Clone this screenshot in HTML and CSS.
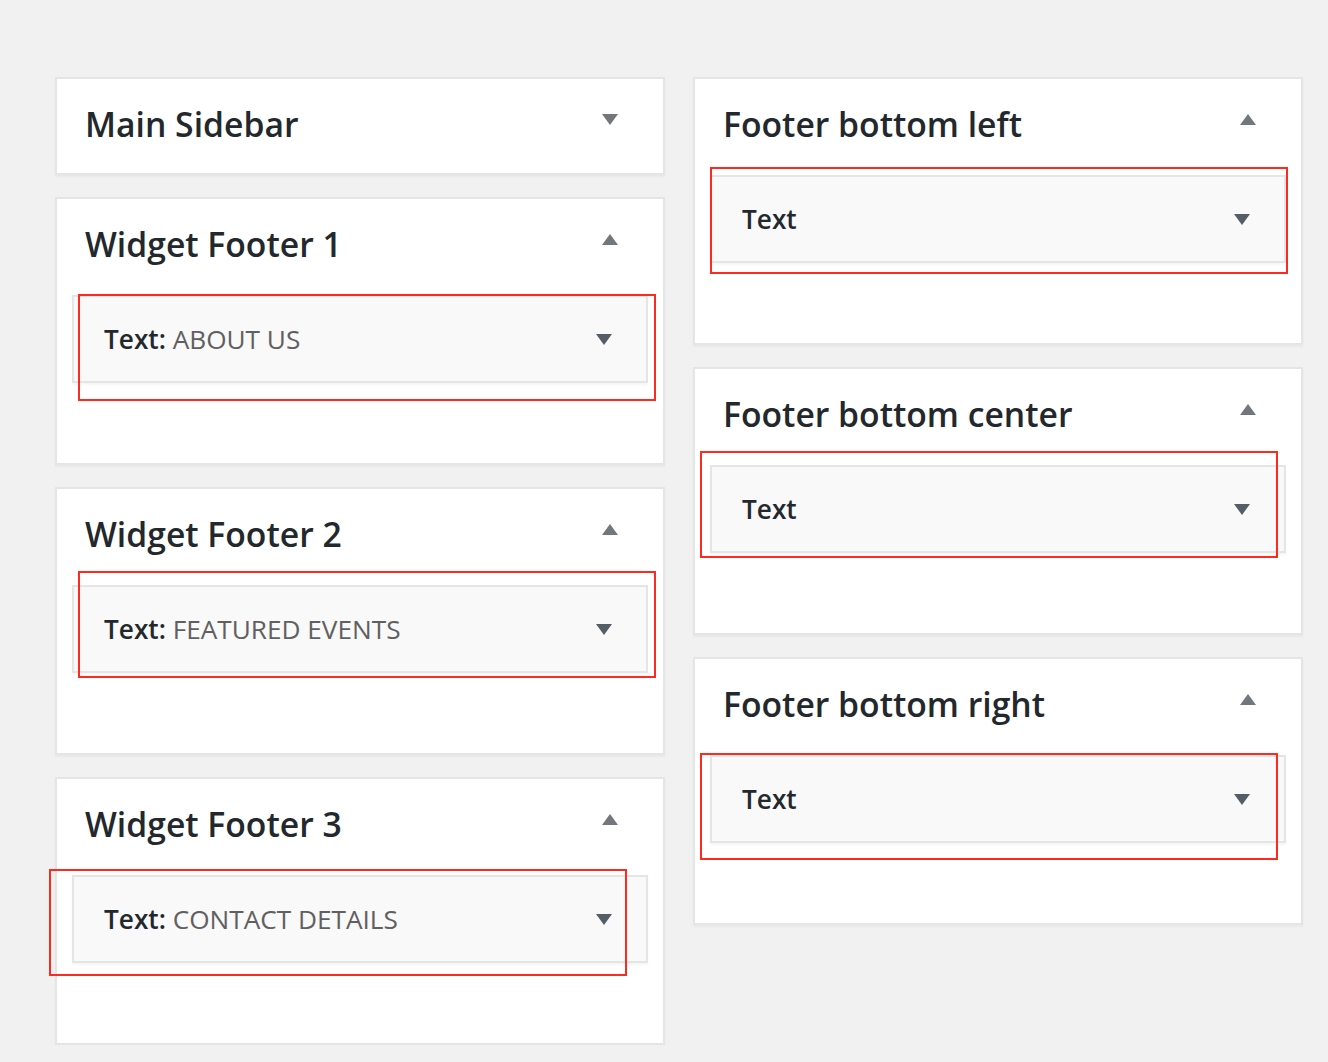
FILE: index.html
```html
<!DOCTYPE html>
<html lang="en">
<head>
<meta charset="utf-8">
<title>Widgets</title>
<link rel="stylesheet" href="styles.css">
</head>
<body>
<div class="areas">
  <div class="column">
    <section class="sidebar collapsed">
      <div class="sidebar-head">
        <h2>Main Sidebar</h2>
        <span class="toggle down"></span>
      </div>
    </section>
    <section class="sidebar">
      <div class="sidebar-head">
        <h2>Widget Footer 1</h2>
        <span class="toggle up"></span>
      </div>
      <div class="widget">
        <h3><strong>Text:</strong> <span class="in-title">ABOUT US</span></h3>
        <span class="wtoggle"></span>
        <div class="mark mark-wf1"></div>
      </div>
    </section>
    <section class="sidebar">
      <div class="sidebar-head">
        <h2>Widget Footer 2</h2>
        <span class="toggle up"></span>
      </div>
      <div class="widget">
        <h3><strong>Text:</strong> <span class="in-title">FEATURED EVENTS</span></h3>
        <span class="wtoggle"></span>
        <div class="mark mark-wf2"></div>
      </div>
    </section>
    <section class="sidebar">
      <div class="sidebar-head">
        <h2>Widget Footer 3</h2>
        <span class="toggle up"></span>
      </div>
      <div class="widget">
        <h3><strong>Text:</strong> <span class="in-title">CONTACT DETAILS</span></h3>
        <span class="wtoggle"></span>
        <div class="mark mark-wf3"></div>
      </div>
    </section>
  </div>
  <div class="column">
    <section class="sidebar">
      <div class="sidebar-head">
        <h2>Footer bottom left</h2>
        <span class="toggle up"></span>
      </div>
      <div class="widget">
        <h3><strong>Text</strong></h3>
        <span class="wtoggle"></span>
        <div class="mark mark-fbl"></div>
      </div>
    </section>
    <section class="sidebar">
      <div class="sidebar-head">
        <h2>Footer bottom center</h2>
        <span class="toggle up"></span>
      </div>
      <div class="widget">
        <h3><strong>Text</strong></h3>
        <span class="wtoggle"></span>
        <div class="mark mark-fbc"></div>
      </div>
    </section>
    <section class="sidebar">
      <div class="sidebar-head">
        <h2>Footer bottom right</h2>
        <span class="toggle up"></span>
      </div>
      <div class="widget">
        <h3><strong>Text</strong></h3>
        <span class="wtoggle"></span>
        <div class="mark mark-fbr"></div>
      </div>
    </section>
  </div>
</div>
</body>
</html>
```
FILE: styles.css
```css
html, body {
  margin: 0;
  padding: 0;
  background: #f1f1f1;
  font-family: "Open Sans", "Noto Sans", "Liberation Sans", sans-serif;
  color: #23282d;
}

.areas {
  display: flex;
  align-items: flex-start;
  gap: 28px;
  padding: 77px 0 0 55px;
}

.column {
  width: 610px;
  display: flex;
  flex-direction: column;
  gap: 22px;
}

.sidebar {
  box-sizing: border-box;
  background: #fff;
  border: 2px solid #e5e5e5;
  box-shadow: 0 2px 2px rgba(0, 0, 0, 0.04);
  padding: 0 15px 80px;
  height: 268px;
}

.sidebar.collapsed {
  height: 98px;
  padding-bottom: 0;
}

.sidebar-head {
  display: flex;
  align-items: center;
  justify-content: space-between;
  height: 93px;
  position: relative;
}

.sidebar-head h2 {
  margin: 0;
  padding-left: 13px;
  font-size: 33.7px;
  font-weight: 600;
  line-height: 1;
  color: #23282d;
  position: relative;
  top: -1px;
}

.toggle {
  position: absolute;
  right: 30px;
  top: 35px;
  width: 0;
  height: 0;
  border-left: 8px solid transparent;
  border-right: 8px solid transparent;
}

.toggle.down {
  border-top: 11px solid #72777c;
}

.toggle.up {
  border-bottom: 11px solid #72777c;
}

.widget {
  position: relative;
  box-sizing: border-box;
  margin-top: 3px;
  height: 88px;
  background: #f9f9f9;
  border: 2px solid #e5e5e5;
  box-shadow: 0 2px 2px rgba(0, 0, 0, 0.04);
  display: flex;
  align-items: center;
  padding: 0 30px;
}

.widget h3 {
  margin: 0;
  font-size: 26.2px;
  line-height: 1;
  font-weight: 600;
  color: #23282d;
  flex: 1;
}

.widget h3 strong {
  font-weight: 600;
}

.in-title {
  font-weight: 400;
  color: #606060;
}

.wtoggle {
  width: 0;
  height: 0;
  border-left: 8px solid transparent;
  border-right: 8px solid transparent;
  border-top: 11px solid #555d66;
  margin-right: 4px;
}

/* red annotation boxes drawn over the widgets */
.mark {
  position: absolute;
  box-sizing: border-box;
  width: 578px;
  height: 107px;
  border: 2px solid #ff2a1f;
  pointer-events: none;
}

.mark-wf1 { left: 4px; top: -3px; }
.mark-wf2 { left: 4px; top: -16px; }
.mark-wf3 { left: -25px; top: -8px; }
.mark-fbl { left: -2px; top: -10px; }
.mark-fbc { left: -12px; top: -16px; }
.mark-fbr { left: -12px; top: -4px; }
```
